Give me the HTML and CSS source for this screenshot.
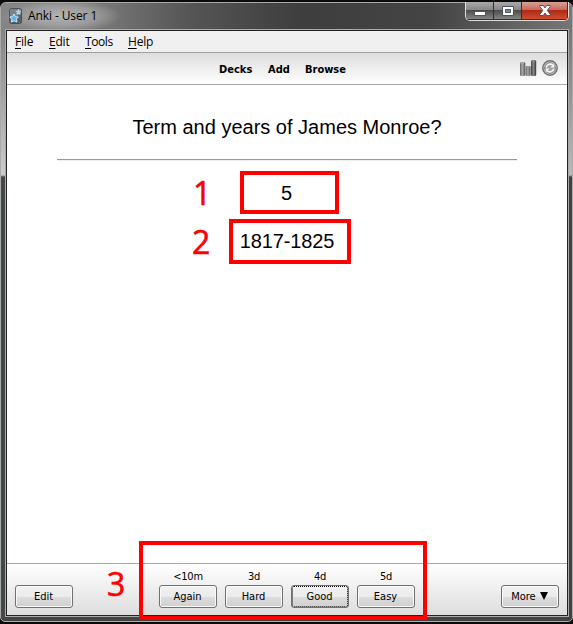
FILE: index.html
```html
<!DOCTYPE html>
<html lang="en">
<head>
<meta charset="utf-8">
<title>Anki - User 1</title>
<link rel="stylesheet" href="styles.css">
</head>
<body>
<div class="window">
  <header class="titlebar">
    <svg class="app-icon" width="13" height="16" viewBox="0 0 13 16">
      <rect x=".5" y=".5" width="12" height="15" rx="2" fill="#5c6165" stroke="#4c5053"/>
      <path d="M1 1h11v5L1 11z" fill="#8b9196" opacity=".7"/>
      <path d="M5 6l1.400 2.600 3 .3-2 2.100.6 3L5 12.800l-2.700 1.300.5-3L.8 9l2.900-.4z" fill="#58b4f2" stroke="#e8f5ff" stroke-width=".8"/>
      <path d="M9.500 1.500l.7 1.700 1.800.2-1.300 1.200.3 1.800-1.500-.9-1.600.9.3-1.800L7 3.400l1.800-.2z" fill="#9ed5f8" stroke="#e8f5ff" stroke-width=".5"/>
    </svg>
    <span class="title">Anki - User 1</span>
    <div class="captions">
      <span class="cap"><svg width="12" height="5"><rect x=".5" y=".5" width="11" height="4" fill="#fff" stroke="#4b5364"/></svg></span>
      <span class="cap"><svg width="12" height="10"><path d="M.5.5h11v9H.5z" fill="#fff" stroke="#4b5364"/><path d="M3.500 3.500h5v3h-5z" fill="#8b8b8d" stroke="#4b5364"/></svg></span>
      <span class="cap close"><svg width="12" height="11"><path d="M.8.5h3.500L6 2.900 7.700.5h3.500v1L8.300 5.400l3 4.100v1H7.700L6 8.100l-1.700 2.400H.8v-1l3-4.100-3-3.900z" fill="#fff" stroke="#4f4450" stroke-width=".9"/></svg></span>
    </div>
  </header>
  <main class="client">
    <nav class="menubar">
      <span class="m-file"><u>F</u>ile</span><span class="m-edit"><u>E</u>dit</span><span class="m-tools"><u>T</u>ools</span><span class="m-help"><u>H</u>elp</span>
    </nav>
    <div class="toolbar">
      <div class="links"><b class="decks">Decks</b><b class="add">Add</b><b class="browse">Browse</b></div>
      <div class="tool-icons">
        <svg width="17" height="17" viewBox="0 0 17 17">
          <defs>
            <linearGradient id="bar"><stop stop-color="#666"/><stop offset=".45" stop-color="#aaa"/><stop offset="1" stop-color="#555"/></linearGradient>
            <linearGradient id="dark"><stop stop-color="#444"/><stop offset=".5" stop-color="#888"/><stop offset="1" stop-color="#303030"/></linearGradient>
          </defs>
          <rect y="2" width="5.300" height="14" rx="1.500" fill="url(#bar)"/><ellipse cx="2.500" cy="3" rx="1.800" ry="1" fill="#aaa"/>
          <rect x="5.600" y="6" width="5" height="10" rx="1" fill="url(#bar)"/><ellipse cx="8.200" cy="7" rx="1.600" ry="1" fill="#999"/>
          <rect x="11" y="0" width="5.200" height="16" rx="1.500" fill="url(#dark)"/><ellipse cx="13.500" cy="1.300" rx="1.700" ry="1" fill="#888"/>
        </svg>
        <svg width="17" height="17" viewBox="0 0 17 17">
          <circle cx="8" cy="8" r="7.200" fill="#ddd" stroke="#707070" stroke-width="1.500"/>
          <circle cx="8" cy="8" r="5.400" fill="#a0a0a0" stroke="#858585"/>
          <path d="M4.200 7.500a4 4 0 0 1 6.800-2.200M11.800 8.500a4 4 0 0 1-6.800 2.200" fill="none" stroke="#f6f6f6" stroke-width="1.600"/>
          <path d="M12.200 3.700v3.900H8.300zM3.800 12.300V8.400h3.900z" fill="#f6f6f6"/>
        </svg>
      </div>
    </div>
    <section class="card">
      <h1>Term and years of James Monroe?</h1>
      <hr>
      <div class="answer first"><span class="mark">1</span><span class="box number">5</span></div>
      <div class="answer second"><span class="mark">2</span><span class="box years">1817-1825</span></div>
    </section>
    <footer class="bottom">
      <button class="edit">Edit</button>
      <div class="grades">
        <div><span>&lt;10m</span><button>Again</button></div>
        <div><span>3d</span><button>Hard</button></div>
        <div><span>4d</span><button class="focused">Good</button></div>
        <div><span>5d</span><button>Easy</button></div>
      </div>
      <button class="more">More <svg width="8" height="8"><path d="M0 0h8L4 8z"/></svg></button>
    </footer>
  </main>
  <span class="mark three">3</span>
  <div class="highlight"></div>
</div>
</body>
</html>
```
FILE: styles.css
```css
* { box-sizing: border-box; }
body {
  margin: 0;
  height: 624px;
  padding-top: 2px;
  overflow: hidden;
  background: #0b0b0b;
  color: #000;
  font: 11px/14px "DejaVu Sans Condensed", "DejaVu Sans", sans-serif;
}
.window {
  position: relative;
  width: 573px;
  height: 620px;
  padding: 0 4px 4px;
  border: 1px solid #aaa;
  border-radius: 6px 6px 5px 5px;
  background:
    linear-gradient(#777, #858585 30px, #ccc 172px, #444747 174px) left / 5px 100% no-repeat,
    linear-gradient(#777, #777 30px, #bcbcbc 172px, #404040 174px) right / 5px 100% no-repeat,
    #444;
}
.titlebar {
  display: flex;
  height: 26px;
  margin: 0 -4px;
  padding-left: 8px;
  background:
    radial-gradient(ellipse 60px 17px at 60px 13px, #b4b4b4 0, #a8a8a8b0 60%, #a8a8a800),
    linear-gradient(90deg, #858585, #747474 110px, #555 190px, #3e3e3e 300px, #444 430px, #777);
  border-radius: 5px 5px 0 0;
}
.app-icon { margin-top: 5px; }
.title {
  margin: 5px 0 0 6px;
  font: 12px/16px "Open Sans", sans-serif;
  letter-spacing: -.1px;
}
.captions {
  display: flex;
  width: 104px;
  height: 19px;
  margin: -1px 3px 0 auto;
  border: 1px solid #ddd;
  border-top: 0;
  border-radius: 0 0 5px 5px;
  overflow: hidden;
}
.cap {
  display: flex;
  align-items: center;
  justify-content: center;
  width: 28px;
  border: solid #303030;
  border-width: 0 1px 1px 0;
  background: linear-gradient(#aaa, #888 45%, #4d4d4d 50%, #858585);
}
.cap:first-child svg { margin-top: 5px; }
.cap.close {
  flex: 1;
  border-color: #5b211a;
  background: linear-gradient(#dba096, #c9695b 45%, #ad2b18 50%, #d04d2b);
}
.client {
  display: flex;
  flex-direction: column;
  height: 586px;
  border: 1px solid #222;
  outline: 1px solid #aaa;
  margin: 1px 0 0 1px;
  width: 562px;
  background: #fff;
}
.menubar {
  display: flex;
  height: 22px;
  padding: 3px 0 0 8px;
  background: #f0f0f0;
  border-bottom: 1px solid #a0a0a0;
  font: 12px/16px "Open Sans", sans-serif;
}
.menubar u { text-underline-offset: 2px; }
.m-file { width: 34px; letter-spacing: -.2px; }
.m-edit { width: 36px; letter-spacing: -.2px; }
.m-tools { width: 43px; letter-spacing: -.4px; }
.m-help { letter-spacing: -.2px; }
.toolbar {
  display: flex;
  height: 32px;
  padding: 9px 8px 0 212px;
  background: linear-gradient(#ddd, #fff);
  border-bottom: 1px solid #aaa;
}
.links { display: flex; font-weight: bold; }
.links b { padding-top: 1px; }
.decks { width: 49px; }
.add { width: 37px; }
.tool-icons { display: flex; gap: 5px; margin: -2px 0 0 auto; }
.card {
  flex: 1;
  font: 20px/24px "Liberation Sans", sans-serif;
}
.card h1 {
  margin: 30px 0 0;
  text-align: center;
  font: inherit;
}
.card hr {
  width: 460px;
  height: 2px;
  margin: 20px 50px 10px;
  border: 0;
  border-top: 1px solid #999;
  border-bottom: 1px solid #eee;
}
.answer { display: flex; }
.box {
  display: flex;
  align-items: center;
  justify-content: center;
  border: 4px solid #f00;
}
.number { width: 99px; height: 43px; padding-right: 6px; margin-left: 30px; }
.years { width: 122px; height: 45px; margin-left: 19px; padding: 0 6px 1px 0; letter-spacing: -.1px; }
.first { padding-left: 187px; margin-bottom: 4px; }
.second { padding-left: 187px; }
.mark {
  width: 16px;
  color: #f00;
  font: 32px/44px "Open Sans", sans-serif;
  text-indent: -2px;
  -webkit-text-stroke: .6px #f00;
}
.first .mark { text-indent: -1px; }
.second .mark { line-height: 46px; }
.bottom {
  display: flex;
  align-items: flex-start;
  height: 52px;
  padding: 21px 8px 0;
  border-top: 1px solid #aaa;
  background: linear-gradient(#fff, #ddd);
}
button {
  width: 58px;
  height: 23px;
  padding: 0 1px 0 0;
  border: 1px solid #707070;
  border-radius: 3px;
  box-shadow: inset 0 0 0 1px #fafafa;
  background: linear-gradient(#f2f2f2, #ebebeb 50%, #ddd 51%, #cfcfcf);
  color: #000;
  font: inherit;
}
.grades { display: flex; gap: 8px; margin: -15px 0 0 86px; }
.grades div { display: flex; flex-direction: column; align-items: center; }
.grades span { height: 15px; letter-spacing: -.2px; }
.focused { outline: 1px dotted #000; outline-offset: -2px; }
.more { margin-left: auto; }
.more svg { margin-left: 1px; }
.three { position: absolute; left: 108px; top: 559px; }
.highlight {
  position: absolute;
  left: 138px;
  top: 538px;
  width: 288px;
  height: 79px;
  border: 4px solid #f00;
}
```
